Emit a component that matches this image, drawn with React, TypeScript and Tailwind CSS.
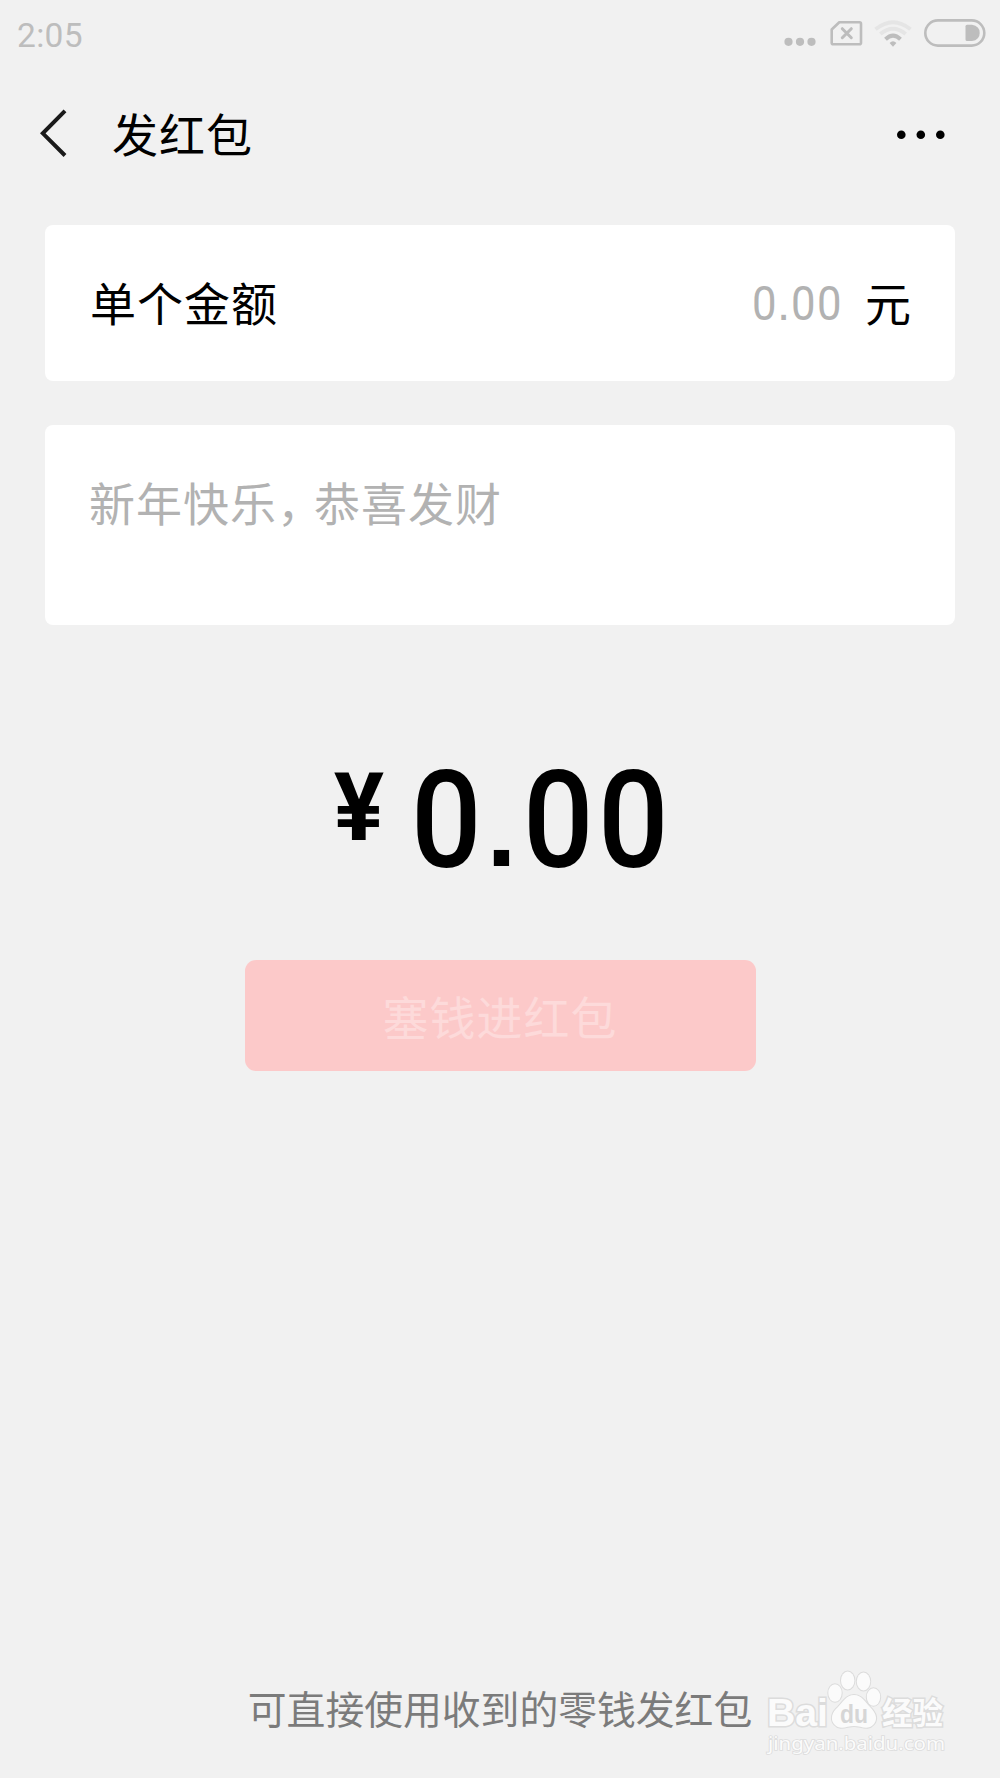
import React from 'react';

function StatusBar() {
  return (
    <div className="flex h-[66px] items-center justify-between pl-[17px] pr-[14px]">
      <span className="mt-[5px] text-[33.5px] leading-none tracking-[0.3px] text-[#bdbdbd]">2:05</span>
      <div className="flex items-center">
        {/* Signal dots */}
        <svg width="32" height="28" viewBox="0 0 32 28" fill="#bdbdbd">
          <circle cx="4.5" cy="22.8" r="4.1" />
          <circle cx="16" cy="22.8" r="4.1" />
          <circle cx="27.5" cy="22.8" r="4.1" />
        </svg>
        {/* No SIM */}
        <svg className="ml-[14px]" width="33" height="28" viewBox="0 0 33 28" fill="none" stroke="#bdbdbd" strokeWidth="2.6">
          <path d="M9.3 3.2H29.5Q31 3.2 31 4.7V23.7Q31 25.2 29.5 25.2H3.2Q1.7 25.2 1.7 23.7V10.5Z" strokeLinejoin="round" />
          <path d="M12.3 9.7L21.3 18.7M21.3 9.7L12.3 18.7" strokeWidth="3" strokeLinecap="round" />
        </svg>
        {/* Wifi */}
        <svg className="ml-[11px]" width="38" height="28" viewBox="0 0 38 28" fill="none" strokeWidth="4">
          <path d="M1.5 10.2Q19 -3.8 36.5 10.2" stroke="#e5e5e5" />
          <path d="M6.3 15Q19 4.5 31.7 15" stroke="#e5e5e5" />
          <path d="M11.5 20.2Q19 13 26.5 20.2" stroke="#bdbdbd" />
          <path d="M15.6 24Q19 20.4 22.4 24L19 27.8Z" fill="#bdbdbd" />
        </svg>
        {/* Battery */}
        <svg className="ml-[12px]" width="62" height="28" viewBox="0 0 62 28">
          <rect x="1.3" y="1.4" width="59" height="25.2" rx="12.6" fill="none" stroke="#bdbdbd" strokeWidth="2.6" />
          <path d="M43 5.8H48Q55.7 7 55.7 13.9T48 22H43Q41.5 22 41.5 20.5V7.3Q41.5 5.8 43 5.8Z" fill="#bdbdbd" />
        </svg>
      </div>
    </div>
  );
}

function Header() {
  return (
    <header className="flex h-[159px] items-start pl-[40px] pr-[54px] pt-[36px]">
      <svg className="mt-[6px] shrink-0" width="28" height="50" viewBox="0 0 28 50" fill="none" stroke="#1a1a1a" strokeWidth="4">
        <path d="M25 2.8L2.8 25.3L25 47.5" />
      </svg>
      <h1 className="ml-[44px] mt-[2px] text-[46px] leading-[64px] tracking-[1px] text-black">发红包</h1>
      <svg className="ml-auto mt-[27px]" width="50" height="12" viewBox="0 0 50 12" fill="#000">
        <circle cx="5.3" cy="5.8" r="4.3" />
        <circle cx="24.8" cy="5.8" r="4.3" />
        <circle cx="44.3" cy="5.8" r="4.3" />
      </svg>
    </header>
  );
}

function Watermark() {
  return (
    <svg className="absolute bottom-[8px] right-[40px]" width="210" height="120" viewBox="0 0 210 120" fill="#fbfbfb" stroke="#dcdcdc" strokeWidth="2" paintOrder="stroke">
      <text x="17" y="76" fontFamily="Liberation Sans" fontWeight="700" fontSize="38" textLength="61" lengthAdjust="spacingAndGlyphs" strokeWidth="3">Bai</text>
      <ellipse cx="85" cy="43" rx="6.7" ry="8.7" />
      <ellipse cx="97.7" cy="30.5" rx="6.7" ry="9" />
      <ellipse cx="113.5" cy="31.5" rx="6.7" ry="9" />
      <ellipse cx="123.5" cy="47" rx="6.7" ry="8.7" />
      <path d="M104 45C112 45 115 52 120 57C126 63 128 69 124 74C118 81 111 76 104 76C97 76 90 81 84 74C80 69 82 62 88 57C93 52 96 45 104 45Z" />
      <text x="90" y="72.5" fontFamily="Liberation Sans" fontWeight="700" fontSize="25" textLength="28" lengthAdjust="spacingAndGlyphs" fill="#d6d6d6" stroke="none">du</text>
      <text x="132" y="74" fontFamily="Noto Sans CJK SC" fontWeight="700" fontSize="30.5" strokeWidth="3">经验</text>
      <text x="18" y="100" fontFamily="Noto Sans" fontSize="18.5" textLength="177" lengthAdjust="spacingAndGlyphs" strokeWidth="1.6">jingyan.baidu.com</text>
    </svg>
  );
}

export default function App() {
  return (
    <div className="relative flex h-[1778px] w-[1000px] flex-col overflow-hidden bg-[#f1f1f1] font-[Roboto,'Noto_Sans_CJK_SC',sans-serif]">
      <StatusBar />
      <Header />

      <main className="flex flex-col items-center px-[45px]">
        {/* Amount */}
        <section className="flex h-[155.5px] w-full items-center rounded-[8px] bg-white pl-[45px] pr-[44px] text-[46px] leading-[64px]">
          <span className="mt-[5px] tracking-[1px] text-black">单个金额</span>
          <span className="ml-auto mt-[3px] flex text-[47.5px] text-[#b2b2b2]">
            <span className="w-[26px] scale-x-[0.92] text-center">0</span>
            <span className="w-[13px] text-center font-['Liberation_Sans']">.</span>
            <span className="w-[26px] scale-x-[0.92] text-center">0</span>
            <span className="w-[26px] scale-x-[0.92] text-center">0</span>
          </span>
          <span className="ml-[23px] mt-[5px] text-black">元</span>
        </section>

        {/* Greeting */}
        <section className="mt-[44.5px] h-[200px] w-full rounded-[8px] bg-white pl-[44px] pt-[48px] text-[46px] leading-[64px] tracking-[1px] text-[#b2b2b2]">
          新年快乐<span className="tracking-[-9px]">，</span>恭喜发财
        </section>

        {/* Total */}
        <div className="mt-[120px] flex h-[150px] items-start justify-center pl-[2px] text-black">
          <span className="mt-[13px] w-[54px] text-center text-[94px] font-bold leading-[100px]">¥</span>
          <span className="ml-[22px] mt-px flex text-[135px] font-medium leading-[150px]">
            <span className="w-[75px] scale-x-[0.92] text-center">0</span>
            <span className="flex w-[37px] justify-center font-['Liberation_Sans'] text-[108px] font-bold leading-[166px]">.</span>
            <span className="w-[75px] scale-x-[0.92] text-center">0</span>
            <span className="w-[75px] scale-x-[0.92] text-center">0</span>
          </span>
        </div>

        <button className="mt-[65px] flex h-[111px] w-[511px] items-center justify-center rounded-[11px] bg-[#fcc9c9] pt-[8px] text-[46px] tracking-[1px] text-[#fddada]">
          塞钱进红包
        </button>
      </main>

      <footer className="mt-auto pb-[38px] text-center text-[38.8px] leading-[58px] text-[#7b7b7b]">可直接使用收到的零钱发红包</footer>
      <Watermark />
    </div>
  );
}
